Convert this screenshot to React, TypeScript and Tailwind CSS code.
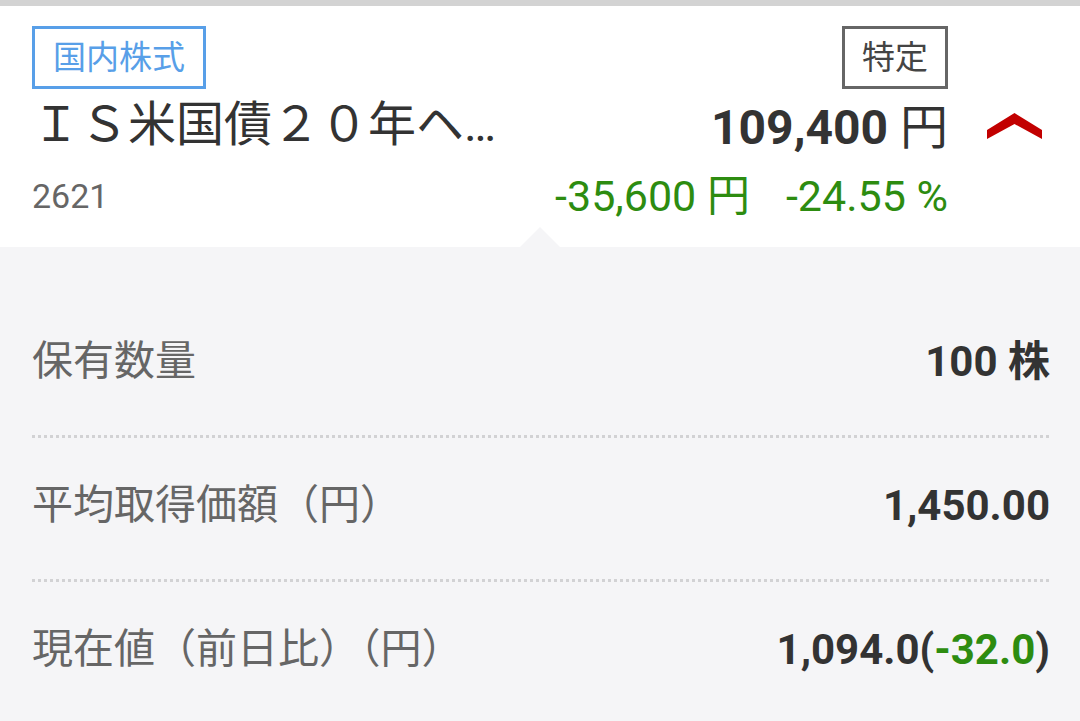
import React from "react";

function Badge({ children, tone }: { children: React.ReactNode; tone: "blue" | "gray" }) {
  return (
    <div
      className={
        tone === "blue"
          ? "h-[63px] px-[18px] flex items-center border-[3px] border-[#589fe8] text-[#589fe8] text-[33px] leading-none"
          : "h-[63px] px-[17px] flex items-center border-[3px] border-[#666666] text-[#444444] text-[33px] leading-none"
      }
    >
      {children}
    </div>
  );
}

function Dotted() {
  return <div className="h-[3px] bg-[repeating-linear-gradient(90deg,#d2d2d4_0_3px,transparent_3px_6px)]" />;
}

export default function App() {
  const rows = [
    { label: "保有数量", value: <span>100 株</span> },
    { label: "平均取得価額（円）", value: <span>1,450.00</span> },
    {
      label: "現在値（前日比）（円）",
      value: (
        <span>
          1,094.0(<span className="text-[#2d8c10]">-32.0</span>)
        </span>
      ),
    },
  ];

  return (
    <div className="w-full h-[721px] overflow-hidden bg-[#f5f5f7] font-['Roboto','Noto_Sans_CJK_JP',sans-serif]">
      <div className="h-[6px] bg-[#d3d3d3]" />

      {/* header card */}
      <header className="relative bg-white pt-[20px] pb-[16px]">
        <div className="flex justify-between pl-[32px] pr-[132px]">
          <Badge tone="blue">国内株式</Badge>
          <Badge tone="gray">特定</Badge>
        </div>

        <div className="flex items-center h-[72px] pl-[32px]">
          <div className="flex-1 min-w-0 whitespace-nowrap text-[48px] leading-none text-[#333333]">
            ＩＳ米国債２０年ヘ…
          </div>
          <div className="mt-[6px] whitespace-nowrap text-[48px] leading-none text-[#333333]">
            <span className="font-bold">109,400</span> 円
          </div>
          <div className="w-[132px] flex justify-center mt-[2px]">
            <svg width="55" height="26" viewBox="0 0 55 26">
              <polygon points="0,17 27.5,0 55,17 55,26 27.5,11 0,26" fill="#c20000" />
            </svg>
          </div>
        </div>

        <div className="flex items-center justify-between h-[70px] pl-[32px] pr-[132px]">
          <span className="text-[34px] leading-none text-[#666666]">2621</span>
          <div className="whitespace-nowrap text-[43px] leading-none text-[#2d8c10]">
            <span>-35,600 円</span>
            <span className="ml-[36px]">-24.55 %</span>
          </div>
        </div>

        <svg className="absolute left-[520px] bottom-0" width="40" height="20" viewBox="0 0 40 20">
          <polygon points="0,20 20,0 40,20" fill="#f5f5f7" />
        </svg>
      </header>

      {/* detail rows */}
      <div className="pt-[47px] pl-[32px] pr-[30px]">
        {rows.map((r, i) => (
          <div key={r.label}>
            {i > 0 && <Dotted />}
            <div className="h-[141px] pb-[6px] flex items-center justify-between">
              <span className="text-[41px] leading-none text-[#666666]">{r.label}</span>
              <span className="text-[42px] leading-none font-bold text-[#333333]">{r.value}</span>
            </div>
          </div>
        ))}
      </div>
    </div>
  );
}
